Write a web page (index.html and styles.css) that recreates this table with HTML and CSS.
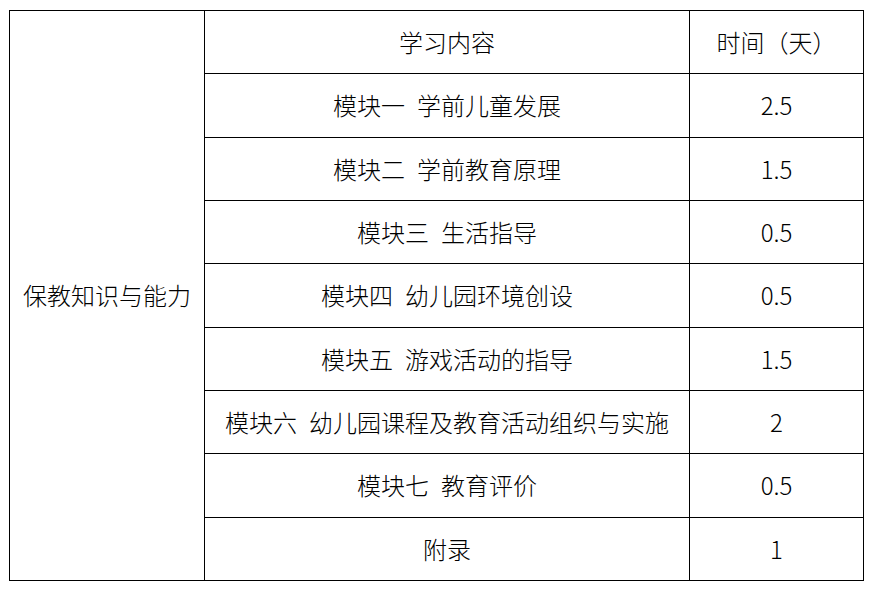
FILE: index.html
```html
<!DOCTYPE html>
<html lang="zh-CN">
<head>
<meta charset="utf-8">
<title>保教知识与能力</title>
<link rel="stylesheet" href="styles.css">
</head>
<body>
<table class="plan">
  <colgroup>
    <col class="c-area">
    <col class="c-content">
    <col class="c-time">
  </colgroup>
  <tbody>
    <tr>
      <td class="area" rowspan="9">保教知识与能力</td>
      <td>学习内容</td>
      <td>时间（天）</td>
    </tr>
    <tr><td>模块一&ensp;学前儿童发展</td><td class="num">2.5</td></tr>
    <tr><td>模块二&ensp;学前教育原理</td><td class="num">1.5</td></tr>
    <tr><td>模块三&ensp;生活指导</td><td class="num">0.5</td></tr>
    <tr><td>模块四&ensp;幼儿园环境创设</td><td class="num">0.5</td></tr>
    <tr><td>模块五&ensp;游戏活动的指导</td><td class="num">1.5</td></tr>
    <tr><td>模块六&ensp;幼儿园课程及教育活动组织与实施</td><td class="num">2</td></tr>
    <tr><td>模块七&ensp;教育评价</td><td class="num">0.5</td></tr>
    <tr><td>附录</td><td class="num">1</td></tr>
  </tbody>
</table>
</body>
</html>
```
FILE: styles.css
```css
html, body {
  margin: 0;
  background: #ffffff;
}
body {
  padding: 10px 0 0 9px;
  font-family: "Noto Sans CJK SC", "Noto Sans", sans-serif;
  font-weight: 300;
  color: #000000;
}
.plan {
  border-collapse: collapse;
  table-layout: fixed;
  width: 854px;
}
.c-area { width: 195px; }
.c-content { width: 485px; }
.c-time { width: 174px; }
.plan td {
  border: 1px solid #000000;
  height: 62.33px;
  padding: 0;
  text-align: center;
  vertical-align: middle;
  font-size: 24px;
  line-height: 30px;
  white-space: nowrap;
}
.plan td.area {
  height: auto;
}
```
